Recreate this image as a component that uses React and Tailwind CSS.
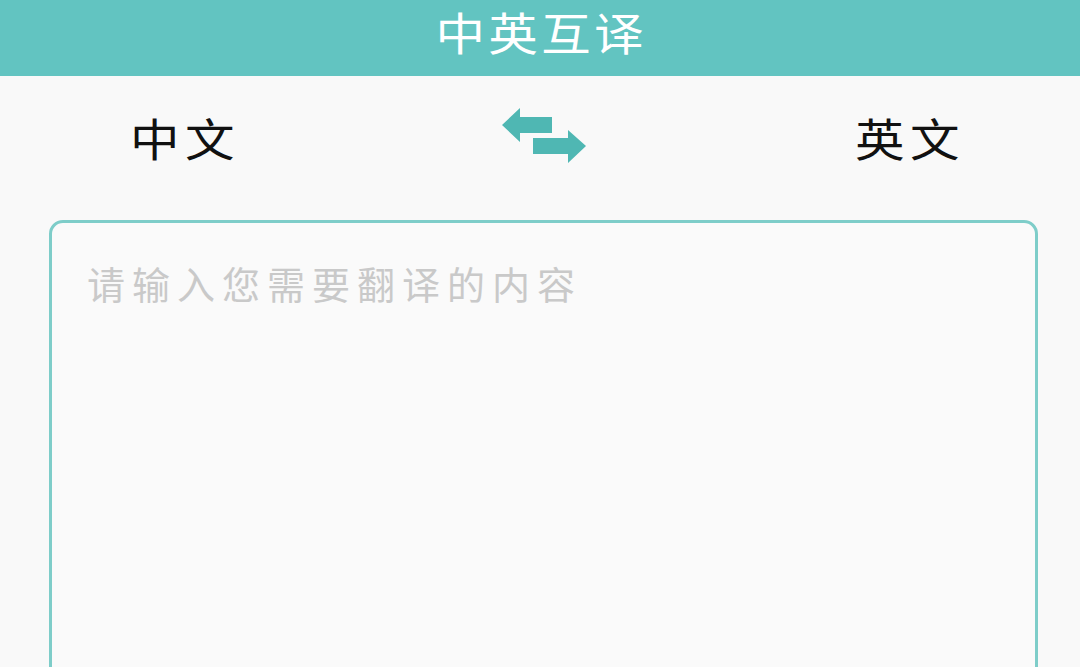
import { useState } from 'react';

function SwapIcon() {
  return (
    <svg width="84" height="58" viewBox="0 0 84 58" className="block">
      {/* left arrow */}
      <path d="M0 17 L18 0 L18 9 L50 9 L50 25 L18 25 L18 34 Z" fill="#4fb7b3" />
      {/* right arrow */}
      <path d="M84 38 L66 22 L66 30 L31 30 L31 46 L66 46 L66 55 Z" fill="#4fb7b3" />
    </svg>
  );
}

export default function App() {
  const [text, setText] = useState('');

  return (
    <div className="h-screen overflow-hidden w-full bg-[#f9f9f9] flex flex-col font-['Noto_Sans_CJK_SC','Noto_Sans',sans-serif]">
      {/* Title bar */}
      <header className="h-[76px] bg-[#62c4c1] flex items-center justify-center shrink-0">
        <h1 className="inline-block scale-x-[1.1] text-[45px] leading-none tracking-[3px] pl-[3px] text-white font-normal pb-[14px]">中英互译</h1>
      </header>

      {/* Language switch row */}
      <div className="flex items-center justify-between pl-[135px] pr-[120px] pt-[32px] pb-[54px]">
        <span className="inline-block scale-x-[1.1] text-[45px] leading-none tracking-[5px] text-[#111] font-normal">中文</span>
        <button className="mr-[8px]">
          <SwapIcon />
        </button>
        <span className="inline-block scale-x-[1.1] text-[45px] leading-none tracking-[5px] text-[#111] font-normal">英文</span>
      </div>

      {/* Input box */}
      <div className="flex-1 pl-[49px] pr-[42px]">
        <div className="h-[500px] border-[3px] border-[#7ecdc9] rounded-[14px] bg-[#fafafa] px-[35px] pt-[41px]">
          <textarea
            value={text}
            onChange={e => setText(e.target.value)}
            placeholder="请输入您需要翻译的内容"
            className="w-full h-full resize-none bg-transparent outline-none text-[38px] leading-none tracking-[7px] text-[#333] placeholder:text-[#c9c9c9]"
          />
        </div>
      </div>
    </div>
  );
}
